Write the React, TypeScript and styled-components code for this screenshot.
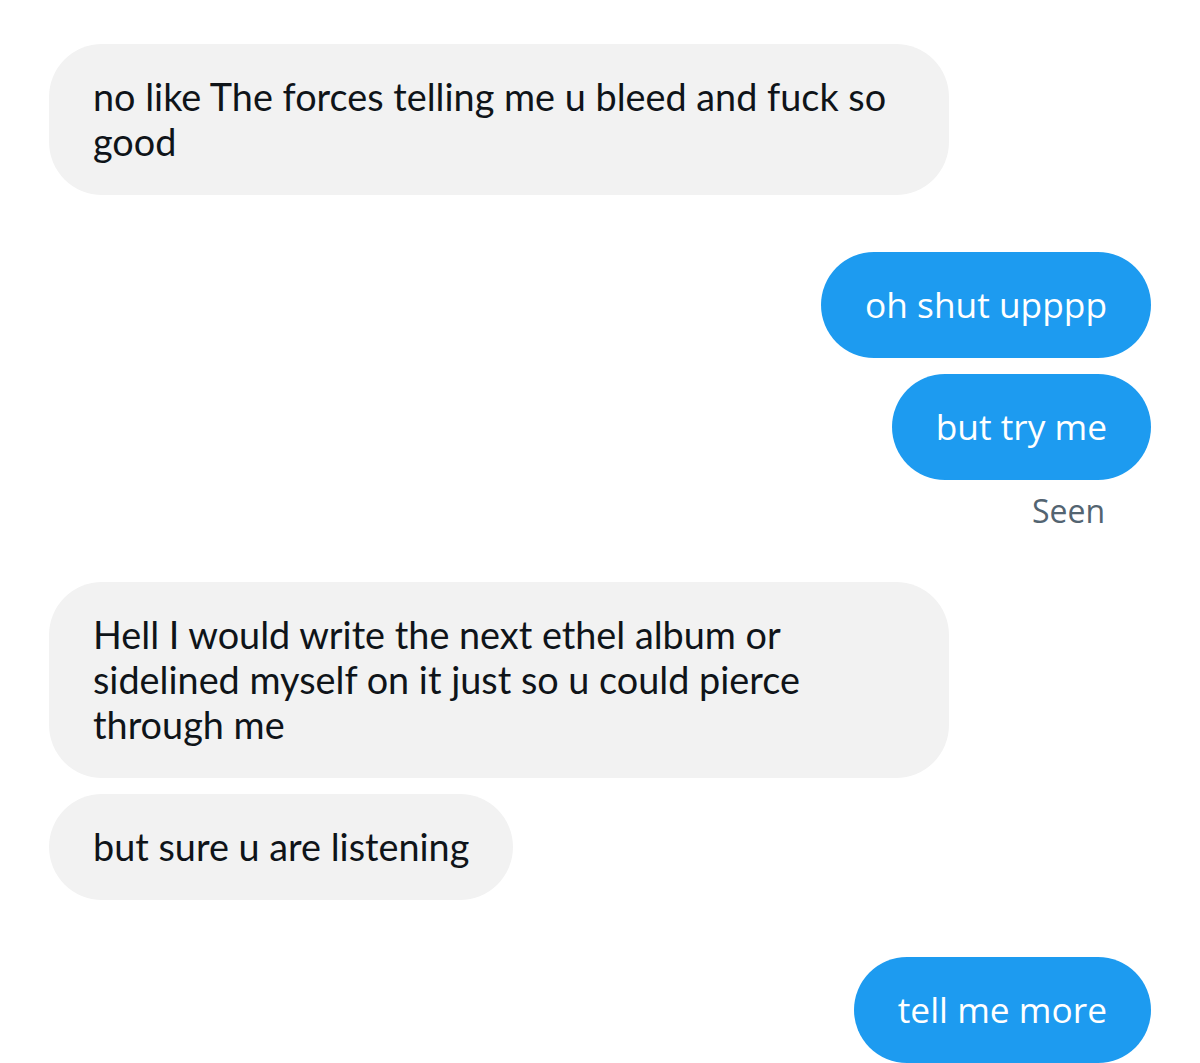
import React from "react";
import styled, { createGlobalStyle } from "styled-components";

const Global = createGlobalStyle`
  html, body { margin: 0; padding: 0; background: #ffffff; }
  body { font-family: "Lato", "Liberation Sans", sans-serif; }
`;

const Thread = styled.div`
  display: flex;
  flex-direction: column;
  padding: 44px 49px 0 49px;
  height: 1063px;
  box-sizing: border-box;
  overflow: hidden;
`;

const Group = styled.div<{ $side: "in" | "out"; $top: number }>`
  display: flex;
  flex-direction: column;
  align-items: ${(p) => (p.$side === "out" ? "flex-end" : "flex-start")};
  gap: 16px;
  margin-top: ${(p) => p.$top}px;
`;

const Bubble = styled.div<{ $side: "in" | "out" }>`
  box-sizing: border-box;
  max-width: 900px;
  padding: 30px 44px 31px;
  border-radius: 53px;
  line-height: 45px;
  background: ${(p) => (p.$side === "out" ? "#1d9bf0" : "#f2f2f2")};
  color: ${(p) => (p.$side === "out" ? "#ffffff" : "#0f1419")};
  font-size: ${(p) => (p.$side === "out" ? "35.3px" : "37.8px")};
  font-family: ${(p) =>
    p.$side === "out"
      ? `"Open Sans", "Liberation Sans", sans-serif`
      : `"Lato", "Liberation Sans", sans-serif`};
`;

const Seen = styled.div`
  font-family: "Open Sans", "Liberation Sans", sans-serif;
  font-size: 32px;
  line-height: 36px;
  color: #536471;
  margin-top: -3px;
  padding-right: 46px;
`;

export default function App() {
  return (
    <>
      <Global />
      <Thread>
        <Group $side="in" $top={0}>
          <Bubble $side="in">
            no like The forces telling me u bleed and fuck so good
          </Bubble>
        </Group>
        <Group $side="out" $top={57}>
          <Bubble $side="out">oh shut upppp</Bubble>
          <Bubble $side="out">but try me</Bubble>
          <Seen>Seen</Seen>
        </Group>
        <Group $side="in" $top={53}>
          <Bubble $side="in">
            Hell I would write the next ethel album or sidelined myself on it
            just so u could pierce through me
          </Bubble>
          <Bubble $side="in">but sure u are listening</Bubble>
        </Group>
        <Group $side="out" $top={57}>
          <Bubble $side="out">tell me more</Bubble>
        </Group>
      </Thread>
    </>
  );
}
